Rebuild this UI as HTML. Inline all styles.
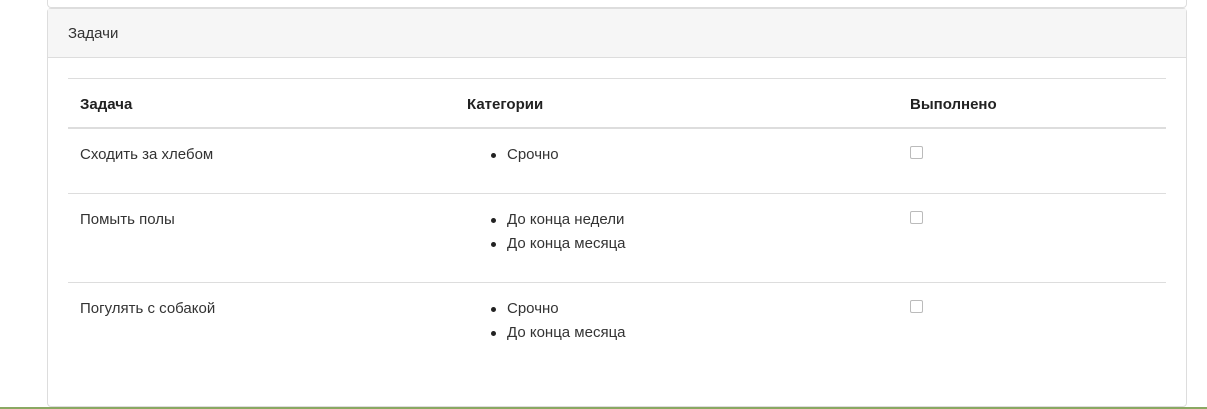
<!DOCTYPE html>
<html><head><style>
body{margin:0;width:1207px;height:409px;background:#fff;font-family:"Liberation Sans",sans-serif;font-size:15px;color:#333;position:relative;overflow:hidden}
.top{position:absolute;left:47px;top:-4px;width:1138px;height:10px;border:1px solid #ddd;border-radius:4px}
.panel{position:absolute;left:47px;top:8px;width:1138px;height:397px;border:1px solid #ddd;border-radius:4px}
.hd{height:49px;background:#f6f6f6;border-bottom:1px solid #ddd;box-sizing:border-box;padding:16px 20px 0}
.t{position:absolute;left:20px;top:69px;width:1098px;border-top:1px solid #ddd}
.abs{position:absolute;white-space:nowrap}
.line{position:absolute;left:0;width:1098px;border-top:1px solid #ddd}
.cb{position:absolute;width:11px;height:11px;border:1px solid #bbb;border-radius:2px}
ul{margin:0;padding:0;list-style:none}
li{position:relative;padding-left:16px;height:24px}
li:before{content:"";position:absolute;left:0;top:7px;width:5px;height:5px;border-radius:50%;background:#222}
.green{position:absolute;left:0;top:407px;width:1207px;height:2px;background:#8aa862}
</style></head><body>
<div class="top"></div>
<div class="panel">
<div class="hd">Задачи</div>
<div class="t">
<div class="abs" style="left:12px;top:17px;font-weight:bold;color:#222">Задача</div>
<div class="abs" style="left:399px;top:17px;font-weight:bold;color:#222">Категории</div>
<div class="abs" style="left:842px;top:17px;font-weight:bold;color:#222">Выполнено</div>
<div class="line" style="top:48px;border-top:2px solid #ddd"></div>
<div class="abs" style="left:12px;top:67px">Сходить за хлебом</div>
<ul class="abs" style="left:423px;top:67px"><li>Срочно</li></ul>
<div class="cb" style="left:842px;top:67px"></div>
<div class="line" style="top:114px"></div>
<div class="abs" style="left:12px;top:132px">Помыть полы</div>
<ul class="abs" style="left:423px;top:132px"><li>До конца недели</li><li>До конца месяца</li></ul>
<div class="cb" style="left:842px;top:132px"></div>
<div class="line" style="top:203px"></div>
<div class="abs" style="left:12px;top:221px">Погулять с собакой</div>
<ul class="abs" style="left:423px;top:221px"><li>Срочно</li><li>До конца месяца</li></ul>
<div class="cb" style="left:842px;top:221px"></div>
</div>
</div>
<div class="green"></div>
</body></html>
